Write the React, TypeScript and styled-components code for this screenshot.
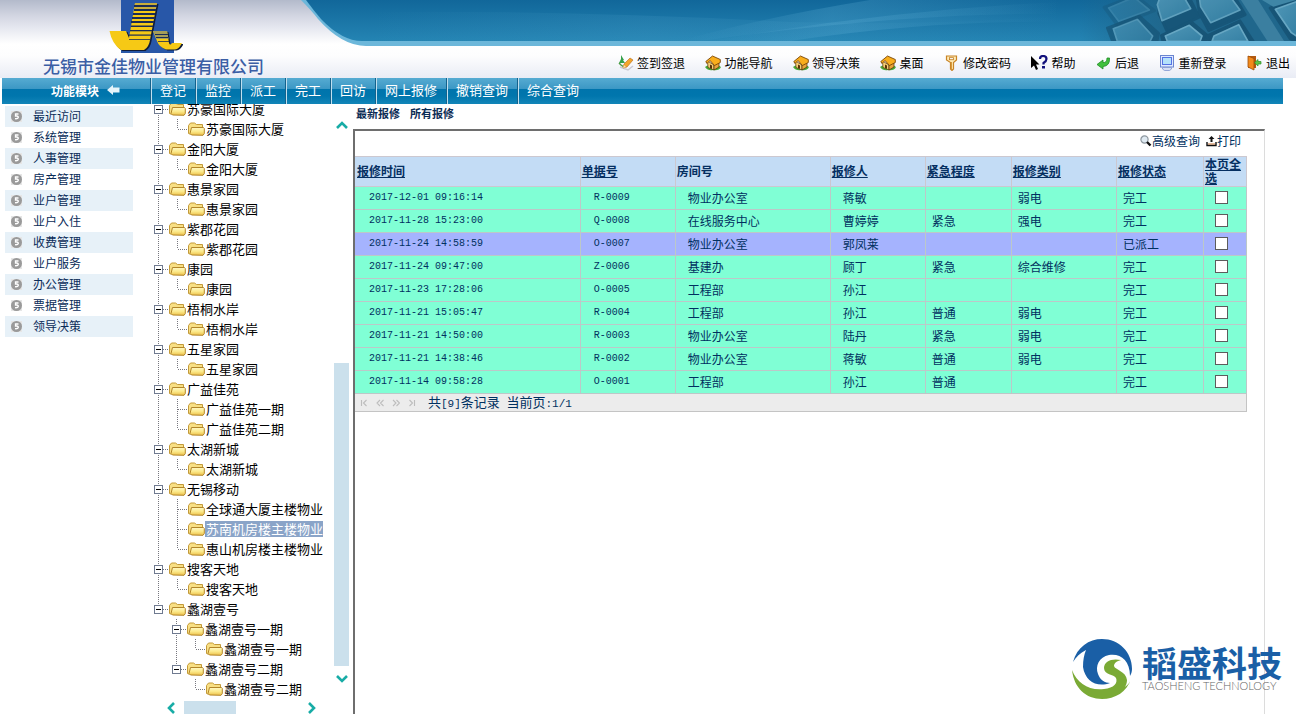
import React from "react";
import styled, { createGlobalStyle } from "styled-components";

const GlobalStyle = createGlobalStyle`
  * { box-sizing: border-box; }
  html, body { margin: 0; padding: 0; background: #fff; }
  body, button, input, table {
    font-family: "Noto Sans CJK SC", "Liberation Sans", sans-serif;
    font-size: 12px;
    color: #003060;
  }
  button { border: 0; background: none; padding: 0; margin: 0; cursor: pointer; }
  a { color: inherit; text-decoration: none; }
  svg { display: block; flex: none; }
`;

const Page = styled.div`
  display: flex;
  flex-direction: column;
  height: 100vh;
  overflow: hidden;
`;

/* ---------- header ---------- */

const Header = styled.header`
  display: grid;
  grid-template-columns: 300px 1fr;
  height: 78px;
  flex: none;
  background: linear-gradient(#b3bacb 0, #d3d6e2 16px, #e6e8f0 28px, #ffffff 44px, #fdfdfe 56px, #e9ecf5 78px);
`;

const Brand = styled.div`
  display: flex;
  flex-direction: column;
  padding-left: 43px;
`;

const BrandMark = styled.svg`
  margin-left: 66px;
`;

const BrandName = styled.div`
  font-size: 17px;
  line-height: 22px;
  font-weight: 500;
  color: #3b5ea5;
  white-space: nowrap;
`;

const HeaderRight = styled.div`
  display: flex;
  flex-direction: column;
  min-width: 0;
`;

const Banner = styled.div`
  display: flex;
  height: 46px;
`;

const BannerFill = styled.div`
  flex: 1;
  min-width: 0;
  background: linear-gradient(#11679a 0, #2484b3 41px, #6cb7da 41px, #6cb7da 46px);
`;

const Tools = styled.nav`
  display: flex;
  justify-content: space-between;
  align-items: center;
  align-self: flex-end;
  width: 672px;
  max-width: 100%;
  height: 32px;
  margin-right: 6px;
  padding-top: 2px;
`;

const Tool = styled.button`
  display: flex;
  align-items: center;
  gap: 3px;
  color: #000;
  line-height: 16px;
  white-space: nowrap;
`;

/* ---------- menu bar ---------- */

const MenuBar = styled.nav`
  display: flex;
  flex: none;
  height: 26px;
  margin: 0 13px 0 2px;
  background: linear-gradient(#56abd2 0, #3b97c4 11px, #0074ac 11px, #0076ad 18px, #1285b8 26px);
  color: #fff;
`;

const ModuleTitle = styled.button`
  display: flex;
  align-items: center;
  gap: 8px;
  width: 149px;
  padding: 0 0 0 49px;
  color: #fff;
  font-weight: 700;
  line-height: 16px;
`;

const MenuItem = styled.button`
  padding: 0 10px 0 8px;
  border-left: 1px solid #bfe0f0;
  box-shadow: -1px 0 0 #14628c;
  color: #fff;
  font-size: 13px;
  line-height: 24px;
  height: 26px;
  padding-bottom: 2px;
  white-space: nowrap;
`;

/* ---------- body ---------- */

const Body = styled.div`
  display: grid;
  grid-template-columns: 150px 203px 1fr;
  flex: 1;
  min-height: 0;
`;

const Sidebar = styled.ul`
  list-style: none;
  margin: 0;
  padding: 2px 17px 0 5px;
`;

const SideItem = styled.li`
  height: 21px;
  &:nth-child(odd) { background: #e7f1f8; }
  a {
    display: flex;
    align-items: center;
    gap: 11px;
    padding-left: 6px;
    line-height: 20px;
    color: #0a2c58;
  }
`;

const TreePane = styled.section`
  display: grid;
  grid-template-columns: 1fr 19px;
  grid-template-rows: 1fr 13px;
  min-height: 0;
`;

const TreeView = styled.div`
  overflow: hidden;
  min-height: 0;
  padding-left: 4px;
`;

const TreeList = styled.ul`
  list-style: none;
  margin: -5px 0 0;
  padding: 0;
`;

const TreeRow = styled.li`
  display: flex;
  align-items: center;
  height: 20px;
`;

const TreeLabel = styled.button<{ $selected?: boolean }>`
  padding: 0 0 0 1px;
  font-size: 13px;
  line-height: 16px;
  white-space: nowrap;
  color: ${(p) => (p.$selected ? "#fff" : "#000")};
  background: ${(p) => (p.$selected ? "#8aa4c8" : "transparent")};
`;

const VScroll = styled.div`
  display: flex;
  flex-direction: column;
  align-items: center;
  padding: 15px 4px 16px 0;
`;

const VThumb = styled.div`
  width: 15px;
  height: 303px;
  margin: auto 0 7px;
  background: #cbe0ec;
`;

const HScroll = styled.div`
  display: flex;
  align-items: center;
  padding: 0 16px 0 15px;
`;

const HThumb = styled.div`
  width: 52px;
  height: 13px;
  margin: 0 auto 0 7px;
  background: #cbe0ec;
`;

/* ---------- content ---------- */

const Content = styled.main`
  display: flex;
  flex-direction: column;
  min-width: 0;
  padding-right: 31px;
`;

const Tabs = styled.nav`
  display: flex;
  gap: 10px;
  height: 25px;
  padding-left: 3px;
  a {
    font-size: 11px;
    line-height: 19px;
    font-weight: 700;
    color: #0c2c54;
  }
`;

const Frame = styled.section`
  flex: 1;
  border-style: solid;
  border-width: 2px 1px 0 2px;
  border-color: #6e6e6e #dcdcdc #dcdcdc #6e6e6e;
  padding-right: 17px;
`;

const Actions = styled.div`
  display: flex;
  justify-content: flex-end;
  align-items: flex-start;
  gap: 6px;
  height: 25px;
  padding-right: 6px;
`;

const Action = styled.button`
  display: flex;
  align-items: center;
  line-height: 19px;
`;

const Grid = styled.table`
  width: 100%;
  table-layout: fixed;
  border-collapse: collapse;
  border-right: 1px solid #c4c4c4;
`;

const HeadCell = styled.th`
  height: 30px;
  padding: 0 0 1px 2px;
  text-align: left;
  line-height: 14px;
  color: #052f61;
  background: #c3dcf5;
  border: 1px solid #ccc8d0;
  border-left-width: 0;
  & + & { border-left-width: 1px; padding-left: 1px; }
  a { text-decoration: underline; }
`;

const Row = styled.tr<{ $active?: boolean }>`
  background: ${(p) => (p.$active ? "#a5b3fe" : "#80ffd5")};
`;

const Cell = styled.td<{ $pad: number; $code?: boolean }>`
  height: 23px;
  padding: 0 0 ${(p) => (p.$code ? 0 : 1)}px ${(p) => p.$pad}px;
  line-height: 16px;
  white-space: nowrap;
  border: 1px solid #bcc8c8;
  border-left-width: 0;
  & + & { border-left-width: 1px; }
  ${(p) => p.$code && `font-family: "Liberation Mono", monospace; font-size: 10px;`}
`;

const Tick = styled.input`
  appearance: none;
  display: block;
  width: 13px;
  height: 13px;
  margin: 0;
  border: 1px solid #5c5c5c;
  background: #fff;
`;

const Pager = styled.div`
  display: flex;
  align-items: center;
  gap: 8px;
  height: 18px;
  padding-left: 5px;
  background: #ececec;
  border: 1px solid #c4c4c4;
  border-width: 0 1px 1px 0;
`;

const PagerText = styled.span`
  margin-left: 4px;
  font-size: 13px;
  line-height: 17px;
  white-space: pre;
`;

const Mono = styled.span`
  font-family: "Liberation Mono", monospace;
  font-size: 11px;
`;

const Watermark = styled.div`
  position: absolute;
  right: 14px;
  bottom: 14px;
  display: flex;
  align-items: center;
  gap: 9px;
`;

const WatermarkName = styled.div`
  font-size: 35px;
  line-height: 34px;
  font-weight: 700;
  color: #1a5fa6;
`;

const WatermarkSub = styled.div`
  font-family: Lato, "Liberation Sans", sans-serif;
  font-weight: 300;
  font-size: 11px;
  line-height: 14px;
  color: #666;
  white-space: nowrap;
`;

/* ---------- drawings ---------- */

const LogoMark = () => (
  <BrandMark width="74" height="55" viewBox="0 0 74 55" aria-hidden="true">
    <rect x="12" y="0" width="53" height="53" fill="#2857a8" />
    <g fill="#101c38" transform="translate(1.500 1)">
      <path d="M26 3H48L41 40Q40 47 35 50H12Q3 44 .5 31H17L20 38Z" />
      <path d="M44 31H58L60 43Q61 46 63 43H73Q70 49 66 49.500H57Q50 47 48 41Z" />
    </g>
    <path d="M26 3H48L41 40Q40 47 35 50H12Q3 44 .5 31H17L20 38Z" fill="#f6c915" />
    <path d="M44 31H58L60 43Q61 46 63 43H73Q70 49 66 49.500H57Q50 47 48 41Z" fill="#f6c915" />
    <path d="M44 31H58L59.500 39H47.500Z" fill="#a69d58" />
    <path d="M26 3H48L46.500 11H24.600Z" fill="#b5a14a" fillOpacity=".7" />
    <g fill="#1b2c55">
      <rect x="25" y="5" width="23" height="2" />
      <rect x="25" y="9" width="22" height="2" />
      <rect x="24" y="13" width="22" height="2" />
      <rect x="23" y="17" width="23" height="2" />
      <rect x="22" y="21" width="23" height="2" />
      <rect x="22" y="25.500" width="22" height="1.500" />
      <rect x="21" y="30" width="22" height="1.300" />
      <rect x="20" y="34.500" width="22" height="1.200" />
      <rect x="20" y="39" width="21" height=".8" />
      <rect x="46" y="34" width="13" height="1" />
      <rect x="47" y="37" width="12" height="1" />
      <rect x="49" y="41" width="11" height=".8" />
    </g>
  </BrandMark>
);

const BannerCurve = () => (
  <svg width="70" height="46" viewBox="0 0 70 46" aria-hidden="true">
    <defs>
      <linearGradient id="curveFill" x1="0" y1="0" x2="0" y2="1">
        <stop offset="0" stopColor="#11679a" />
        <stop offset="1" stopColor="#2484b3" />
      </linearGradient>
    </defs>
    <path d="M1 0Q12 11 18 19Q42 46 66 46H70V0Z" fill="#6cb7da" />
    <path d="M6 0Q14 11 21 19Q42 41 62 41H70V0Z" fill="url(#curveFill)" />
  </svg>
);

const BannerStreaks = () => (
  <svg width="100%" height="46" viewBox="0 0 690 46" preserveAspectRatio="none" aria-hidden="true">
    <defs>
      <linearGradient id="streak" x1="0" y1="0" x2="1" y2="0">
        <stop offset="0" stopColor="#62b2d8" stopOpacity="0" />
        <stop offset=".4" stopColor="#62b2d8" stopOpacity=".26" />
        <stop offset="1" stopColor="#62b2d8" stopOpacity="0" />
      </linearGradient>
    </defs>
    <path d="M310 41Q390 18 500 0H690V14Q540 12 330 41Z" fill="url(#streak)" />
    <path d="M340 41Q520 10 690 2V22Q560 20 420 41Z" fill="url(#streak)" />
    <path d="M0 12Q200 10 420 22Q560 26 690 16V41H0Z" fill="url(#streak)" fillOpacity=".5" />
  </svg>
);

const keyFaces = [
  { side: "300,0 392,0 418,52 322,96 296,40", face: "300,-8 372,-8 392,26 306,62 292,14", dim: 0.9 },
  { side: "412,0 530,0 556,44 446,92 418,40", face: "418,-8 512,-8 540,30 452,68 422,20", dim: 0.9 },
  { side: "142,84 238,48 296,100 290,130 160,130", face: "160,86 232,58 278,108 270,124 172,124", dim: 0.7 },
  { side: "304,106 392,64 440,104 436,130 310,130", face: "316,108 388,76 426,108 420,124 322,124", dim: 1 },
  { side: "440,108 540,62 580,124 450,130", face: "462,108 536,74 564,124 456,124", dim: 1 },
  { side: "132,22 226,-14 284,32 172,76", face: "146,24 222,-8 268,30 176,64", dim: 0.35 },
  { side: "630,24 712,-8 712,126 690,116", face: "646,28 712,4 712,110 694,98", dim: 1 },
];

const Keyboard = () => (
  <svg width="236" height="46" viewBox="0 0 236 46" aria-hidden="true">
    <defs>
      <linearGradient id="kbBase" x1="0" y1="0" x2="0" y2="1">
        <stop offset="0" stopColor="#11679a" />
        <stop offset="1" stopColor="#2484b3" />
      </linearGradient>
      <linearGradient id="kbFade" x1="0" y1="0" x2="1" y2="0">
        <stop offset="0" stopColor="#20678c" stopOpacity="0" />
        <stop offset=".4" stopColor="#20678c" stopOpacity="1" />
      </linearGradient>
      <linearGradient id="kbFace" x1="0" y1="0" x2="1" y2="1">
        <stop offset="0" stopColor="#4f96b6" />
        <stop offset="1" stopColor="#3580a4" />
      </linearGradient>
    </defs>
    <rect width="236" height="41" fill="url(#kbBase)" />
    <rect x="20" width="216" height="41" fill="url(#kbFade)" />
    <svg width="236" height="41" viewBox="0 0 708 123">
      {keyFaces.map((k) => (
        <g key={k.face} opacity={k.dim} strokeLinejoin="round">
          <polygon points={k.side} fill="#175577" stroke="#175577" strokeWidth="8" />
          <polygon points={k.face} fill="url(#kbFace)" stroke="#67a7c3" strokeWidth="5" />
        </g>
      ))}
      <path d="M540 -4H592L672 123H622Z" fill="#3b7fa0" />
      <path d="M606 0H708L640 20Z" fill="#3f86a6" />
    </svg>
    <rect y="41" width="236" height="5" fill="#6cb7da" />
  </svg>
);

const SignIcon = () => (
  <svg width="16" height="16" viewBox="0 0 16 16" aria-hidden="true">
    <path d="M2 12L10 15L15 11" fill="none" stroke="#c9c9d4" strokeWidth="1.500" />
    <path d="M3 0L6 5H5L7 8H1L3 4Z" fill="#35a04b" />
    <path d="M1 8L3 10L6 12" stroke="#4a9a40" fill="none" strokeWidth="1.500" />
    <path d="M12 3L15 5L9 12L5 13L6 9Z" fill="#f3a52c" stroke="#b46a18" strokeWidth=".6" />
    <path d="M5 13L6 10L8 12Z" fill="#f9dfb0" />
  </svg>
);

const HouseIcon = () => (
  <svg width="16" height="16" viewBox="0 0 16 16" aria-hidden="true">
    <path d="M0 12Q3 9 8 11Q13 9 16 12Q14 16 8 15Q3 16 0 12Z" fill="#4aa836" />
    <path d="M2.500 6L9 10V15L3 12.500Z" fill="#f7cf74" stroke="#513009" strokeWidth=".7" />
    <path d="M9 10L14 7.500V12L9 15Z" fill="#e8a43a" stroke="#513009" strokeWidth=".7" />
    <path d="M.8 6.500L7.500 1L15.300 4.500V7.500L9.500 10.500L5 5.500L2 8.500Z" fill="#f9ae1c" stroke="#7a4606" strokeWidth=".9" />
    <path d="M5 9.500L7 10.500V14L5 13Z" fill="#5a3206" />
  </svg>
);

const KeyIcon = () => (
  <svg width="16" height="16" viewBox="0 0 16 16" aria-hidden="true">
    <path d="M2.500 1H12.500V5L9.500 7.500V14L8 15.500L6.500 14V7.500L2.500 5Z" fill="#fde9b4" stroke="#c98425" strokeWidth="1.200" />
    <rect x="5.500" y="2.700" width="4" height="2" fill="#fff" stroke="#bf7a1f" strokeWidth=".8" />
    <path d="M7.500 7V14" stroke="#d79a3c" />
  </svg>
);

const HelpIcon = () => (
  <svg width="17" height="16" viewBox="0 0 17 16" aria-hidden="true">
    <path d="M0 1V13L3 10.500L5 15L7 14L5 9.500H8.500Z" fill="#000" />
    <path d="M9 4Q9 1 12 1Q15.500 1 15.500 4Q15.500 6 12.500 8V9.500" fill="none" stroke="#13127c" strokeWidth="2.200" />
    <rect x="11" y="11" width="3" height="2.500" fill="#13127c" />
  </svg>
);

const BackIcon = () => (
  <svg width="16" height="16" viewBox="0 0 16 16" aria-hidden="true">
    <path d="M1 9.500L7 5V7.500Q11 8 11 3L13.500 3Q14 11 7 11.500V14Z" fill="#3fc03c" stroke="#1f8a24" strokeWidth=".8" />
  </svg>
);

const MonitorIcon = () => (
  <svg width="16" height="16" viewBox="0 0 16 16" aria-hidden="true">
    <rect x="1.500" y=".5" width="13" height="11.500" fill="#dfe9ff" stroke="#6b86cf" />
    <rect x="3.500" y="2.500" width="9" height="7" fill="#b4e2fa" stroke="#5572e4" />
    <path d="M3.500 12.500H12.500V14L10.500 15.500H5.500L3.500 14Z" fill="#d6def5" stroke="#7f95cf" strokeWidth=".8" />
  </svg>
);

const DoorIcon = () => (
  <svg width="16" height="16" viewBox="0 0 16 16" aria-hidden="true">
    <path d="M1 1H9V13H1Z" fill="#b35a12" />
    <path d="M1 1L7 3.500V15L1 12Z" fill="#f28a1c" stroke="#9c4c0a" strokeWidth=".8" />
    <path d="M14 6.500V9H11V11L7.500 7.700L11 4.500V6.500Z" fill="#5fc64a" stroke="#2f8f2a" strokeWidth=".7" />
  </svg>
);

const ArrowLeft = () => (
  <svg width="13" height="12" viewBox="0 0 13 12" aria-hidden="true">
    <path d="M0 5L6 0V2.500H12.500V7.500H6V10Z" fill="#e6f4fa" />
  </svg>
);

const Bullet = () => (
  <svg width="11" height="11" viewBox="0 0 11 11" aria-hidden="true">
    <rect width="11" height="11" fill="#e6e6e6" />
    <circle cx="5.500" cy="5.500" r="5.500" fill="#9a9a9a" />
    <path d="M7.500 3H4.500V5H6Q7.500 5.300 7.300 6.500Q7 8 4 7.700" fill="none" stroke="#fff" strokeWidth="1.300" />
  </svg>
);

const Folder = () => (
  <svg width="17" height="14" viewBox="0 0 17 14" aria-hidden="true">
    <defs>
      <linearGradient id="folderFront" x1="0" y1="0" x2="0" y2="1">
        <stop offset="0" stopColor="#fff8c4" />
        <stop offset=".5" stopColor="#fcea8c" />
        <stop offset="1" stopColor="#ecc04a" />
      </linearGradient>
    </defs>
    <path d="M.5 11.500V3.500L2.500 1H6.500L8.500 2.500H14.500V12H1.500Z" fill="#f8df84" stroke="#c39a38" />
    <path d="M3.500 13L2 11.500L3.500 5.500H15.500L16.300 6.500V11.500L15 13.300Z" fill="url(#folderFront)" stroke="#b3862a" />
  </svg>
);

type GuideKind = "line" | "blank" | "toggle" | "toggleLast" | "tee" | "elbow";

const dots = { stroke: "#77777f", strokeDasharray: "1 1", strokeWidth: 1 };

/** One indentation cell of the tree: connector dots and, for branches, the minus box. */
const Guide = ({ kind }: { kind: GuideKind }) => {
  if (kind === "line" || kind === "blank") {
    return (
      <svg width="18" height="20" viewBox="0 0 18 20" aria-hidden="true">
        {kind === "line" && <path d="M4.500 0V20" {...dots} />}
      </svg>
    );
  }
  if (kind === "tee" || kind === "elbow") {
    return (
      <svg width="16" height="20" viewBox="0 0 16 20" aria-hidden="true">
        <path d={kind === "tee" ? "M5.500 0V20" : "M5.500 0V10"} {...dots} />
        <path d="M6 10.500H16" {...dots} />
      </svg>
    );
  }
  return (
    <svg width="15" height="20" viewBox="0 0 15 20" aria-hidden="true">
      <path d={kind === "toggleLast" ? "M4.500 0V6" : "M4.500 0V20"} {...dots} />
      <path d="M9 10.500H15" {...dots} />
      <rect x=".5" y="6.500" width="8" height="8" fill="#fff" stroke="#6f7a90" />
      <path d="M2 10.500H7" stroke="#000" />
    </svg>
  );
};

const Chevron = ({ dir }: { dir: "up" | "down" | "left" | "right" }) => {
  const turn = { up: 0, right: 90, down: 180, left: 270 }[dir];
  return (
    <svg width="12" height="12" viewBox="0 0 12 12" aria-hidden="true">
      <path d="M1 9L6 4L11 9" fill="none" stroke="#18aca6" strokeWidth="2.600" transform={`rotate(${turn} 6 6)`} />
    </svg>
  );
};

const SearchIcon = () => (
  <svg width="12" height="12" viewBox="0 0 12 12" aria-hidden="true">
    <circle cx="4.500" cy="4.500" r="3.600" fill="#dfeaf2" stroke="#8d979f" strokeWidth="1.200" />
    <path d="M7 7L10.500 10.500" stroke="#111" strokeWidth="2.400" />
  </svg>
);

const PrintIcon = () => (
  <svg width="11" height="12" viewBox="0 0 11 12" aria-hidden="true">
    <path d="M5.500 1L8.500 4H6.500V7H4.500V4H2.500Z" fill="#111" />
    <path d="M1 7V10.500H10V7" fill="none" stroke="#111" strokeWidth="1.400" />
    <path d="M2 9H9" stroke="#c4743a" />
  </svg>
);

const PagerArrow = ({ d }: { d: string }) => (
  <svg width="8" height="8" viewBox="0 0 8 8" aria-hidden="true">
    <path d={d} fill="none" stroke="#bdbdbd" strokeWidth="1.100" />
  </svg>
);

const TaoshengMark = () => (
  <svg width="62" height="62" viewBox="0 0 62 62" aria-hidden="true">
    <path
      d="M2 24C6 9 18 1 31 1C48 1 61 14 61 31C61 34 60 36 59 38C59 22 49 15 38 17C28 19 24 28 27 36C29 42 34 45 39 45C26 50 14 43 12 29C12 22 13 17 15 12C9 15 5 19 2 24Z"
      fill="#1a5fa6"
    />
    <path
      d="M1 32C6 45 18 53 33 51C43 50 47 45 45 40C43 36 33 37 33 30C33 23 41 20 50 22C46 23 43 25 43 28C44 32 55 33 56 42C56 45 55 47 54 49C57 47 59 44 60 41C56 54 44 61 31 61C15 61 3 50 1 32Z"
      fill="#7aaa35"
    />
  </svg>
);

/* ---------- data ---------- */

const tools: [string, () => React.ReactElement][] = [
  ["签到签退", SignIcon],
  ["功能导航", HouseIcon],
  ["领导决策", HouseIcon],
  ["桌面", HouseIcon],
  ["修改密码", KeyIcon],
  ["帮助", HelpIcon],
  ["后退", BackIcon],
  ["重新登录", MonitorIcon],
  ["退出", DoorIcon],
];

const menu = ["登记", "监控", "派工", "完工", "回访", "网上报修", "撤销查询", "综合查询"];

const modules = [
  "最近访问", "系统管理", "人事管理", "房产管理", "业户管理", "业户入住",
  "收费管理", "业户服务", "办公管理", "票据管理", "领导决策",
];

interface TreeNode {
  label: string;
  children?: TreeNode[];
}

const leaf = (label: string): TreeNode => ({ label });
const branch = (label: string, ...children: TreeNode[]): TreeNode => ({ label, children });

const tree: TreeNode[] = [
  branch("苏豪国际大厦", leaf("苏豪国际大厦")),
  branch("金阳大厦", leaf("金阳大厦")),
  branch("惠景家园", leaf("惠景家园")),
  branch("紫郡花园", leaf("紫郡花园")),
  branch("康园", leaf("康园")),
  branch("梧桐水岸", leaf("梧桐水岸")),
  branch("五星家园", leaf("五星家园")),
  branch("广益佳苑", leaf("广益佳苑一期"), leaf("广益佳苑二期")),
  branch("太湖新城", leaf("太湖新城")),
  branch("无锡移动", leaf("全球通大厦主楼物业"), leaf("苏南机房楼主楼物业"), leaf("惠山机房楼主楼物业")),
  branch("搜客天地", leaf("搜客天地")),
  branch(
    "蠡湖壹号",
    branch("蠡湖壹号一期", leaf("蠡湖壹号一期")),
    branch("蠡湖壹号二期", leaf("蠡湖壹号二期")),
  ),
];

const selectedLabel = "苏南机房楼主楼物业";

interface FlatNode {
  label: string;
  guides: GuideKind[];
}

function flatten(nodes: TreeNode[], indent: GuideKind[] = []): FlatNode[] {
  return nodes.flatMap((node, i) => {
    const last = i === nodes.length - 1;
    if (!node.children) {
      return [{ label: node.label, guides: [...indent, last ? "elbow" : "tee"] as GuideKind[] }];
    }
    return [
      { label: node.label, guides: [...indent, last ? "toggleLast" : "toggle"] as GuideKind[] },
      ...flatten(node.children, [...indent, last ? "blank" : "line"]),
    ];
  });
}

const columns = [
  { title: "报修时间", width: 225, pad: 14, sortable: true, code: true },
  { title: "单据号", width: 95, pad: 13, sortable: true, code: true },
  { title: "房间号", width: 155, pad: 12, sortable: false },
  { title: "报修人", width: 95, pad: 12, sortable: true },
  { title: "紧急程度", width: 86, pad: 6, sortable: true },
  { title: "报修类别", width: 105, pad: 6, sortable: true },
  { title: "报修状态", width: 87, pad: 6, sortable: true },
];

const rows = [
  ["2017-12-01 09:16:14", "R-0009", "物业办公室", "蒋敏", "", "弱电", "完工"],
  ["2017-11-28 15:23:00", "Q-0008", "在线服务中心", "曹婷婷", "紧急", "强电", "完工"],
  ["2017-11-24 14:58:59", "O-0007", "物业办公室", "郭凤莱", "", "", "已派工"],
  ["2017-11-24 09:47:00", "Z-0006", "基建办", "顾丁", "紧急", "综合维修", "完工"],
  ["2017-11-23 17:28:06", "O-0005", "工程部", "孙江", "", "", "完工"],
  ["2017-11-21 15:05:47", "R-0004", "工程部", "孙江", "普通", "弱电", "完工"],
  ["2017-11-21 14:50:00", "R-0003", "物业办公室", "陆丹", "紧急", "弱电", "完工"],
  ["2017-11-21 14:38:46", "R-0002", "物业办公室", "蒋敏", "普通", "弱电", "完工"],
  ["2017-11-14 09:58:28", "O-0001", "工程部", "孙江", "普通", "", "完工"],
];

export default function App() {
  return (
    <Page>
      <GlobalStyle />
      <Header>
        <Brand>
          <LogoMark />
          <BrandName>无锡市金佳物业管理有限公司</BrandName>
        </Brand>
        <HeaderRight>
          <Banner>
            <BannerCurve />
            <BannerFill>
              <BannerStreaks />
            </BannerFill>
            <Keyboard />
          </Banner>
          <Tools>
            {tools.map(([label, Icon]) => (
              <Tool key={label}>
                <Icon />
                {label}
              </Tool>
            ))}
          </Tools>
        </HeaderRight>
      </Header>

      <MenuBar>
        <ModuleTitle>
          功能模块
          <ArrowLeft />
        </ModuleTitle>
        {menu.map((label) => (
          <MenuItem key={label}>{label}</MenuItem>
        ))}
      </MenuBar>

      <Body>
        <Sidebar>
          {modules.map((label) => (
            <SideItem key={label}>
              <a href="#">
                <Bullet />
                {label}
              </a>
            </SideItem>
          ))}
        </Sidebar>

        <TreePane>
          <TreeView>
            <TreeList>
              {flatten(tree).map((node, i) => (
                <TreeRow key={i}>
                  {node.guides.map((kind, j) => (
                    <Guide key={j} kind={kind} />
                  ))}
                  <Folder />
                  <TreeLabel $selected={node.label === selectedLabel}>{node.label}</TreeLabel>
                </TreeRow>
              ))}
            </TreeList>
          </TreeView>
          <VScroll>
            <Chevron dir="up" />
            <VThumb />
            <Chevron dir="down" />
          </VScroll>
          <HScroll>
            <Chevron dir="left" />
            <HThumb />
            <Chevron dir="right" />
          </HScroll>
        </TreePane>

        <Content>
          <Tabs>
            <a href="#">最新报修</a>
            <a href="#">所有报修</a>
          </Tabs>
          <Frame>
            <Actions>
              <Action>
                <SearchIcon />
                高级查询
              </Action>
              <Action>
                <PrintIcon />
                打印
              </Action>
            </Actions>
            <Grid>
              <colgroup>
                {columns.map((c) => (
                  <col key={c.title} width={c.width} />
                ))}
                <col width={43} />
              </colgroup>
              <thead>
                <tr>
                  {columns.map((c) => (
                    <HeadCell key={c.title}>{c.sortable ? <a href="#">{c.title}</a> : c.title}</HeadCell>
                  ))}
                  <HeadCell>
                    <a href="#">本页全选</a>
                  </HeadCell>
                </tr>
              </thead>
              <tbody>
                {rows.map((row, i) => (
                  <Row key={row[0]} $active={i === 2}>
                    {row.map((value, j) => (
                      <Cell key={j} $pad={columns[j].pad} $code={columns[j].code}>
                        {value}
                      </Cell>
                    ))}
                    <Cell $pad={11}>
                      <Tick type="checkbox" aria-label={row[1]} />
                    </Cell>
                  </Row>
                ))}
              </tbody>
            </Grid>
            <Pager>
              <PagerArrow d="M1.500 1V7M6.500 1L3.500 4L6.500 7" />
              <PagerArrow d="M4 1L1 4L4 7M7.500 1L4.500 4L7.500 7" />
              <PagerArrow d="M1 1L4 4L1 7M4.500 1L7.500 4L4.500 7" />
              <PagerArrow d="M1.500 1L4.500 4L1.500 7M6.500 1V7" />
              <PagerText>
                共<Mono>[9]</Mono>条记录<Mono> </Mono>当前页<Mono>:1/1</Mono>
              </PagerText>
            </Pager>
          </Frame>
        </Content>
      </Body>

      <Watermark>
        <TaoshengMark />
        <div>
          <WatermarkName>韬盛科技</WatermarkName>
          <WatermarkSub>TAOSHENG TECHNOLOGY</WatermarkSub>
        </div>
      </Watermark>
    </Page>
  );
}
